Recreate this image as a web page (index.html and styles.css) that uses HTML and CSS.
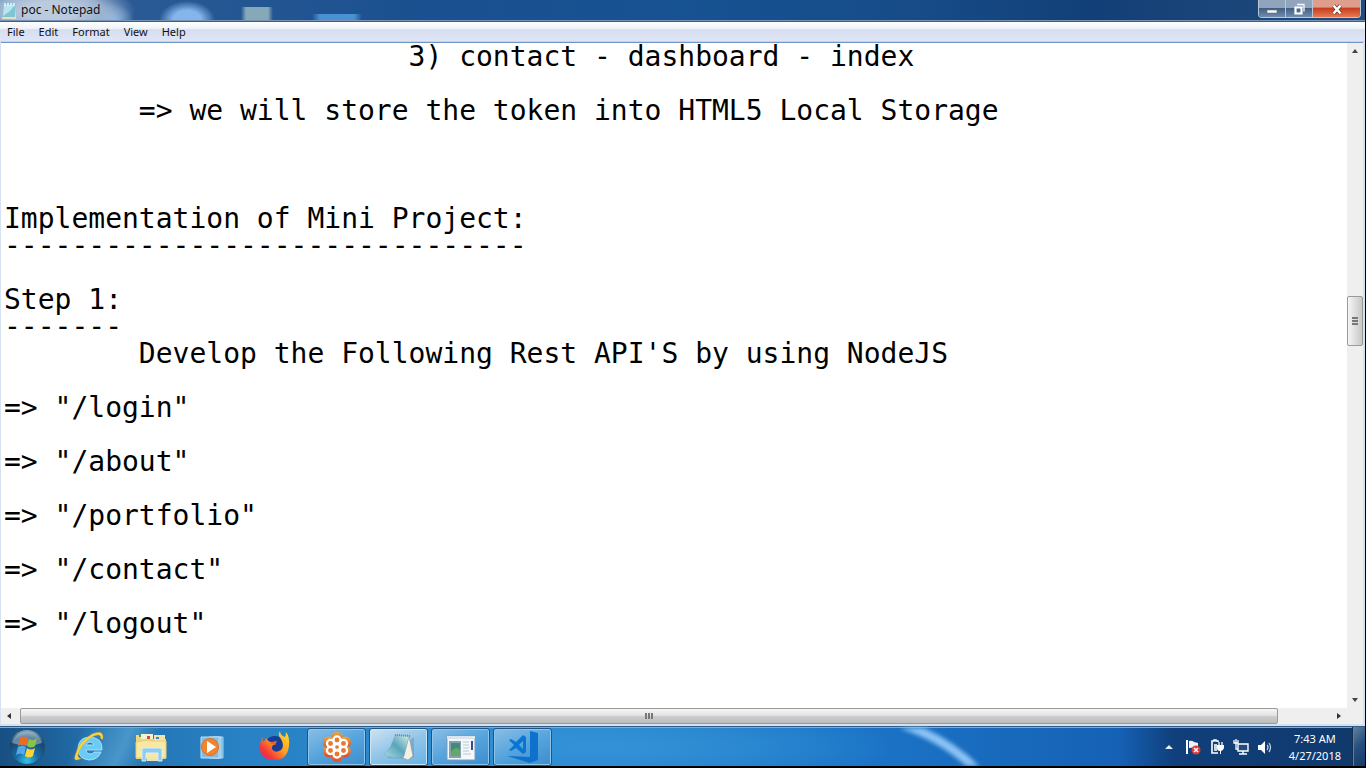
FILE: index.html
```html
<!DOCTYPE html>
<html lang="en">
<head>
<meta charset="utf-8">
<title>poc - Notepad</title>
<link rel="stylesheet" href="styles.css">
</head>
<body>
<main class="window">
  <header class="titlebar">
    <svg class="app-icon" width="16" height="18" viewBox="0 0 16 18"><path d="M3 2h12l-1 14H1z" fill="#7fc5d6"/><path d="M3 3h11l-5 6-7 5z" fill="#b9e6ed"/><path d="M1 15h13l1-12v14H1z" fill="#e6dfc0"/><path d="M4 1v3M7 1v3M10 1v3M13 1v3" stroke="#eef8fb" stroke-width="1.5"/></svg>
    <h1 class="title">poc - Notepad</h1>
    <div class="caption-buttons">
      <button class="cap" aria-label="Minimize"><svg width="12" height="14" viewBox="0 0 12 14"><path d="M1 8h10v3H1z" fill="#fff" stroke="#5f6b7c" stroke-width=".6"/></svg></button>
      <button class="cap" aria-label="Restore"><svg width="12" height="14" viewBox="0 0 12 14"><path d="M4 2.500h7v7" fill="none" stroke="#f5f7fa" stroke-width="1.300"/><path d="M2.500 5.500h6v6h-6z" fill="none" stroke="#fff" stroke-width="2.200"/></svg></button>
      <button class="cap close" aria-label="Close"><svg width="12" height="14" viewBox="0 0 12 14"><path d="M2.500 3.500l7 8M9.500 3.500l-7 8" stroke="#6e3329" stroke-width="4"/><path d="M2.500 3.500l7 8M9.500 3.500l-7 8" stroke="#fff" stroke-width="2.600"/></svg></button>
    </div>
  </header>
  <nav class="menubar">
    <button class="menu">File</button><button class="menu">Edit</button><button class="menu">Format</button><button class="menu">View</button><button class="menu">Help</button>
  </nav>
  <section class="document">
    <textarea class="editor" aria-label="Document text" wrap="off" spellcheck="false">&#9;&#9;&#9;3) contact - dashboard - index

&#9;=> we will store the token into HTML5 Local Storage



Implementation of Mini Project:
-------------------------------

Step 1:
-------
&#9;Develop the Following Rest API'S by using NodeJS

=> "/login"

=> "/about"

=> "/portfolio"

=> "/contact"

=> "/logout"
</textarea>
    <div class="vscroll">
      <button class="arrow" aria-label="Scroll up"><svg width="6" height="4" viewBox="0 0 6 4"><path d="M0 4l3-4 3 4z" fill="#444"/></svg></button>
      <div class="track-before"></div>
      <div class="thumb"><i></i><i></i><i></i></div>
      <div class="track-after"></div>
      <button class="arrow" aria-label="Scroll down"><svg width="6" height="4" viewBox="0 0 6 4"><path d="M0 0l3 4 3-4z" fill="#444"/></svg></button>
    </div>
    <div class="hscroll">
      <button class="arrow" aria-label="Scroll left"><svg width="4" height="6" viewBox="0 0 4 6"><path d="M4 0L0 3l4 3z" fill="#333"/></svg></button>
      <div class="thumb"><i></i><i></i><i></i></div>
      <div class="track-after"></div>
      <button class="arrow" aria-label="Scroll right"><svg width="4" height="6" viewBox="0 0 4 6"><path d="M0 0l4 3-4 3z" fill="#333"/></svg></button>
    </div>
    <div class="corner"></div>
  </section>
</main>
<footer class="taskbar">
  <svg class="streak" width="100" height="38" viewBox="0 0 100 38"><path d="M0-4Q44 10 76 42" fill="none" stroke="#8cc3f5" stroke-width="9"/></svg>
  <button class="start" aria-label="Start"><svg width="38" height="38" viewBox="0 0 38 38"><defs><radialGradient id="orb" cx=".5" cy=".9" r=".9"><stop offset="0" stop-color="#35c3e8"/><stop offset=".35" stop-color="#176ea5"/><stop offset=".75" stop-color="#17456f"/><stop offset="1" stop-color="#8eafc5"/></radialGradient></defs><circle cx="19" cy="19" r="17.500" fill="url(#orb)" stroke="#244d70"/><path d="M4 15a15.500 15.500 0 0130 0q-14 5-30 0z" fill="#d8e9f2" opacity=".4"/><path d="M12 10q4-3 8 0l-2 8q-4-3-8 0z" fill="#ee6a24"/><path d="M21 11q4 3 8-1l-2 8q-4 3-8 0z" fill="#8ac443"/><path d="M10 19q4-3 8 0l-2 8q-4-3-8 0z" fill="#51a9ec"/><path d="M19 20q4 3 8 0l-2 8q-4 3-8 0z" fill="#fbd238"/></svg></button>
  <div class="pinned">
    <button class="pin" aria-label="Internet Explorer"><svg width="34" height="34" viewBox="0 0 34 34"><path d="M30 20H14q0 4 4 4 3 0 4-2h7q-3 8-12 8Q6 29 6 18 7 7 18 7q13 1 12 13zM14 15h8q-1-3-4-3t-4 3z" fill="#6accf5" stroke="#bde9fc" stroke-width=".8"/><path d="M10 28q-9 5-7-2Q6 12 20 4q12-5 11 5h-2q0-7-9-2Q9 14 6 25q0 4 4 3z" fill="#f7d447" stroke="#cca72c" stroke-width=".4"/></svg></button>
    <button class="pin" aria-label="Windows Explorer"><svg width="34" height="34" viewBox="0 0 34 34"><path d="M2 5h11l2 4h17v20H2z" fill="#edd67f"/><path d="M5 3h7v4H5z" fill="#4a9957"/><path d="M7 4h12v5H7z" fill="#f5f1d8"/><path d="M13 6h3v3h-3z" fill="#d94a36"/><path d="M20 5h11v6H20z" fill="#f3e4a5"/><path d="M22 7h3v2h-3z" fill="#3b83cc"/><path d="M2 12l12-2 4 1h14v17H2z" fill="#f7e8a3" stroke="#e7cd73"/><path d="M8 20q0-2 2-2h16q2 0 2 2v11h-4v-8H12v8H8z" fill="#90cbed" stroke="#d4effb"/><path d="M13 27h11v4H13z" fill="#eee5b6"/></svg></button>
    <button class="pin" aria-label="Windows Media Player"><svg width="34" height="34" viewBox="0 0 34 34"><path d="M17 7h10v21H17z" fill="#65afe0" stroke="#a5d3ef"/><path d="M13 7h12v21H13z" fill="#8bc4e8" stroke="#bde1f4"/><path d="M5 7h18v21H5z" fill="#83bce3" stroke="#bee0f3"/><circle cx="14" cy="17" r="8.500" fill="#f2842d" stroke="#dc7126"/><path d="M11 11l9 6-9 6z" fill="#fff"/></svg></button>
    <button class="pin" aria-label="Firefox"><svg width="34" height="34" viewBox="0 0 34 34"><defs><linearGradient id="fox" x1="1" x2="0" y2="1"><stop stop-color="#ffe42d"/><stop offset=".45" stop-color="#ff9b22"/><stop offset=".75" stop-color="#f63a38"/><stop offset="1" stop-color="#d9206a"/></linearGradient></defs><circle cx="17" cy="17" r="11" fill="#173e95"/><path d="M5 7q-1 3 0 5l4-4q0 3 4 4l5 2q-5 1-4 5 3 5 9 1 4-4 0-11-4-4-1-8 0 4 5 6 1-2 1-5 4 5 3 14-2 15-16 14Q1 29 2 17q0-6 3-10z" fill="url(#fox)"/><path d="M12 14q2-3 7-3l-2 4z" fill="#ed6226"/></svg></button>
  </div>
  <div class="running">
    <button class="task" aria-label="Meeting"><svg width="34" height="34" viewBox="0 0 34 34"><defs><linearGradient id="meet" x2="0" y2="1"><stop stop-color="#f5a72e"/><stop offset="1" stop-color="#d84b32"/></linearGradient></defs><g fill="url(#meet)"><circle cx="17" cy="8" r="6"/><circle cx="25" cy="12.500" r="6"/><circle cx="25" cy="21.500" r="6"/><circle cx="17" cy="26" r="6"/><circle cx="9" cy="21.500" r="6"/><circle cx="9" cy="12.500" r="6"/></g><g fill="#e87830" stroke="#fff" stroke-width="2.300"><circle cx="17" cy="10" r="3.600"/><circle cx="23.500" cy="13.500" r="3.600"/><circle cx="23.500" cy="20.500" r="3.600"/><circle cx="17" cy="24" r="3.600"/><circle cx="10.500" cy="20.500" r="3.600"/><circle cx="10.500" cy="13.500" r="3.600"/><circle cx="17" cy="17" r="3"/></g></svg></button>
    <button class="task active" aria-label="poc - Notepad"><svg width="34" height="34" viewBox="0 0 34 34"><defs><linearGradient id="note" x1="1" x2="0" y2="1"><stop stop-color="#d2eeee"/><stop offset=".5" stop-color="#5aa5ba"/><stop offset="1" stop-color="#a8dbe0"/></linearGradient></defs><path d="M5 28l21 1 6-2V7z" fill="#4e839c" opacity=".35"/><path d="M27 6l4 20-5 4-5-2z" fill="#f2f0e5" stroke="#a0967b" stroke-width=".6"/><path d="M13 5l14 1-5 20q-9 4-20-2 7-5 11-19z" fill="url(#note)" stroke="#80afbc" stroke-width=".5"/><path d="M13 5l15 1" stroke="#6d8c94" stroke-width="2" stroke-dasharray="1 1"/></svg></button>
    <button class="task" aria-label="Application"><svg width="34" height="34" viewBox="0 0 34 34"><path d="M3 6h28v24H3z" fill="#f5f8fb" stroke="#7d9bb3"/><path d="M3 6h28v3H3z" fill="#dbe6ee"/><path d="M5 11h12v17H5z" fill="#84a0b3"/><path d="M7 13h9v13H7z" fill="#438a79"/><path d="M7 22q5-7 9-2v6H7z" fill="#65a866"/><path d="M19 12h6M19 15h6M19 18h6M19 21h6M19 24h8" stroke="#bac7ce"/><path d="M27 11h2v9h-2z" fill="#344d91"/></svg></button>
    <button class="task" aria-label="Visual Studio Code"><svg width="34" height="34" viewBox="0 0 34 34"><path d="M24 1l8 2v27l-8 3L1 26l23 1z" fill="#0c72ce"/><path fill-rule="evenodd" d="M17 5l3 2v15l-3 2-7-6-5 3-2-1 5-5-5-5 2-1 5 3zm0 6l-4 4 4 4z" fill="#0876d2"/></svg></button>
  </div>
  <div class="tray">
    <button class="tray-icon" aria-label="Show hidden icons"><svg width="8" height="16" viewBox="0 0 8 16"><path d="M0 10l4-4 4 4z" fill="#e5edf5"/></svg></button>
    <button class="tray-icon" aria-label="Action Center"><svg width="16" height="16" viewBox="0 0 16 16"><path d="M2 1v14" stroke="#fff" stroke-width="2"/><path d="M4 2q3-1 5 1l4 1v6q-5-2-9-1z" fill="#f1f4f7"/><circle cx="11" cy="11" r="4.500" fill="#dc3c3c"/><path d="M9 9l4 4m0-4l-4 4" stroke="#fff" stroke-width="1.500"/></svg></button>
    <button class="tray-icon" aria-label="Power"><svg width="16" height="16" viewBox="0 0 16 16"><path d="M9 3V2H7V1H5v1H3v12h6" fill="none" stroke="#fff" stroke-width="1.600"/><path d="M5 5h3v7H5z" fill="#c7d8e6"/><path d="M10 3v3m3-3v3" stroke="#fff" stroke-width="1.300"/><path d="M8 6h7v3q-1 3-3 3v3h-1v-3q-3 0-3-3z" fill="#fff"/></svg></button>
    <button class="tray-icon" aria-label="Network"><svg width="16" height="16" viewBox="0 0 16 16"><path d="M5 5h10v7H5zM10 12v3M6 15h8" fill="#214c7d" stroke="#fff" stroke-width="1.400"/><path d="M1 1v3h4V1M3 0v10h2" fill="none" stroke="#fff" stroke-width="1.300"/></svg></button>
    <button class="tray-icon" aria-label="Volume"><svg width="16" height="16" viewBox="0 0 16 16"><path d="M1 6h3l4-4v13l-4-4H1z" fill="#fff"/><path d="M10 6q2 2 0 5M12 4q3 4 0 9" fill="none" stroke="#c8d7e5" stroke-width="1.200"/></svg></button>
    <button class="clock"><time datetime="2018-04-27T07:43">7:43 AM<br>4/27/2018</time></button>
    <button class="show-desktop" aria-label="Show desktop"></button>
  </div>
</footer>
</body>
</html>
```
FILE: styles.css
```css
* { box-sizing: border-box; }
body {
  display: flex;
  flex-direction: column;
  height: 100vh;
  margin: 0;
  overflow: hidden;
  border-right: 1px solid #000;
  border-bottom: 2px solid #000;
  background: #d5e2f2;
  color: #111;
  font: 12px/16px "Noto Sans", "Open Sans", sans-serif;
}
button { margin: 0; padding: 0; border: 0; background: none; color: inherit; font: inherit; }
svg { display: block; flex: none; }
.window { flex: 1; min-height: 0; display: flex; flex-direction: column; padding-bottom: 2px; }
.titlebar {
  display: flex;
  flex: none;
  height: 22px;
  padding: 0 4px 0 1px;
  border-bottom: 1px solid #405d83;
  box-shadow: inset 0 -1px #7893b7;
  background:
    radial-gradient(ellipse 85px 32px at 50px 11px, #bccadd 0 30%, #9bb3d0 60%, transparent 100%),
    radial-gradient(ellipse 30px 18px at 104px 20px, #8db9e9 0 35%, transparent),
    radial-gradient(ellipse 28px 19px at 187px 20px, #86b5ec 0 50%, transparent),
    linear-gradient(90deg, transparent 241px, #85a9b8 246px 268px, transparent 273px) 0 7px / 100% 15px no-repeat,
    linear-gradient(90deg, transparent 312px, #4a91d3 320px 354px, transparent 362px) 0 14px / 100% 8px no-repeat,
    linear-gradient(90deg, #315f98, #1b508f 30%, #175292 50%, #164b87 68%, #123f77 80%, #224b7c);
}
.app-icon { margin-top: 2px; }
.title { flex: 1; margin: 2px 0 0 4px; font-size: 12px; line-height: 16px; font-weight: 400; }
.caption-buttons { display: flex; height: 18px; border: 1px solid #bac7d6; border-top: 0; border-radius: 0 0 4px 4px; overflow: hidden; }
.cap {
  display: grid;
  place-items: center;
  width: 27px;
  border-right: 1px solid #bac7d6;
  background: linear-gradient(#90a5bc 0 45%, #435f82 50%, #718caf);
}
.cap.close { width: 47px; border: 0; background: linear-gradient(#df9d8c 0 40%, #c63f20 50%, #e47a4f); }
.menubar {
  display: flex;
  flex: none;
  height: 20px;
  border-bottom: 1px solid #cbd3e4;
  background: linear-gradient(#fff 0, #eef2fa 35%, #d6def0 40%, #dfe5f5);
}
.menu { padding: 0 7px; font-size: 11px; line-height: 18px; }
.document {
  flex: 1;
  min-height: 0;
  display: grid;
  grid-template: minmax(0, 1fr) 16px / minmax(0, 1fr) 16px;
  margin: 0 2px 0 1px;
  border-top: 1px solid #6d96c7;
  background: #efefef;
}
.editor {
  width: 100%;
  height: 100%;
  margin: 0;
  padding: 0 3px;
  border: 0;
  outline: 0;
  resize: none;
  overflow: hidden;
  background: #fff;
  color: #000;
  font: 28px/27px "DejaVu Sans Mono", monospace;
  tab-size: 8;
  white-space: pre;
}
.vscroll, .hscroll { display: flex; }
.vscroll { flex-direction: column; }
.arrow { display: grid; place-items: center; flex: none; width: 16px; height: 16px; }
.thumb { display: flex; align-items: center; justify-content: center; gap: 1px; border: 1px solid #999; border-radius: 2px; }
.thumb i { background: #777; }
.vscroll .thumb { flex: 0 0 50px; flex-direction: column; background: linear-gradient(90deg, #f6f6f6, #dedede 50%, #c8c8c8); }
.vscroll .thumb i { width: 6px; height: 2px; }
.hscroll .thumb { flex: 1258; margin-left: 3px; background: linear-gradient(#f6f6f6, #e3e3e3 45%, #c9cccf 55%, #bdbdbd); }
.hscroll .thumb i { width: 2px; height: 6px; }
.track-before { flex: 236; }
.track-after { flex: 345; }
.hscroll .track-after { flex: 53; }
.taskbar {
  position: relative;
  display: flex;
  flex: none;
  height: 40px;
  padding-left: 8px;
  border-top: 1px solid #315a84;
  box-shadow: inset 0 1px #75addb;
  background:
    radial-gradient(ellipse 300px 40px at 600px 20px, #3392d7 0, transparent),
    linear-gradient(115deg, transparent 75px, #4996ca 120px, transparent 145px),
    linear-gradient(90deg, #174f82 0, #2471ae 7%, #2882c5 18%, #2b8bd0 40%, #1c75c7 62%, #1561b5 82%, #103f7c 86%, #10396b 100%);
}
.streak { position: absolute; left: 66%; top: 1px; filter: blur(2px); }
.start { width: 38px; }
.pinned { display: flex; margin-left: 12px; }
.pin { display: grid; place-items: center; width: 62px; }
.running { display: flex; gap: 3px; margin-left: 1px; padding-top: 1px; }
.task {
  display: grid;
  place-items: center;
  width: 59px;
  border: 1px solid #205482;
  border-radius: 3px;
  box-shadow: inset 0 0 0 1px #8fc4eb;
  background: linear-gradient(155deg, #8abee5, #56a4dd 50%, #3d8dce);
}
.task.active { background: linear-gradient(155deg, #cee4f3, #91c4e8 50%, #66b3e5); box-shadow: inset 0 0 0 1px #cce5f6; }
.tray { display: flex; align-items: center; gap: 8px; margin-left: auto; color: #fff; }
.tray-icon { display: grid; place-items: center; }
.tray-icon:first-child { margin-right: 4px; }
.clock { margin: 0 3px 0 8px; text-align: center; font-size: 11px; line-height: 17px; }
.show-desktop { align-self: stretch; width: 13px; border-left: 1px solid #162e4b; background: linear-gradient(135deg, #66819f, #234e7d 50%, #153b68); box-shadow: inset 1px 0 #607e9e; }
```
